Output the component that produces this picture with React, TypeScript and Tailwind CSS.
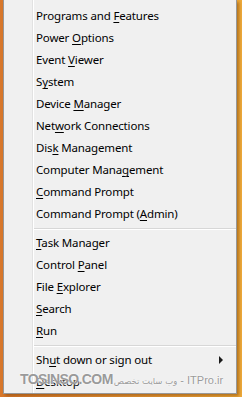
const groups: { label: string; key: number }[][] = [
  [
    { label: 'Programs and Features', key: 13 },
    { label: 'Power Options', key: 6 },
    { label: 'Event Viewer', key: 6 },
    { label: 'System', key: 1 },
    { label: 'Device Manager', key: 7 },
    { label: 'Network Connections', key: 3 },
    { label: 'Disk Management', key: 3 },
    { label: 'Computer Management', key: 13 },
    { label: 'Command Prompt', key: 0 },
    { label: 'Command Prompt (Admin)', key: 16 },
  ],
  [
    { label: 'Task Manager', key: 0 },
    { label: 'Control Panel', key: 8 },
    { label: 'File Explorer', key: 5 },
    { label: 'Search', key: 0 },
    { label: 'Run', key: 0 },
  ],
  [
    { label: 'Shut down or sign out', key: 2 },
    { label: 'Desktop', key: 0 },
  ],
]

function Label({ label, at }: { label: string; at: number }) {
  return (
    <span>
      {label.slice(0, at)}
      <span className="underline underline-offset-2 decoration-1">{label[at]}</span>
      {label.slice(at + 1)}
    </span>
  )
}

export default function App() {
  return (
    <div className="relative w-[242px] h-[397px] overflow-hidden bg-gradient-to-r from-[#d8782c] via-[#e69436] to-[#eeaa3a] pl-[3px] font-['Noto_Sans',sans-serif] text-[11.5px] tracking-[-0.15px] text-black">
      <div className="relative w-[234px] h-[394px] bg-[#f0f0f0] border border-t-0 border-[#979797] shadow-[2px_2px_3px_rgba(120,60,0,0.5)] pt-[5px]">
        {/* gutter line */}
        <div className="absolute left-[28px] top-0 bottom-0 w-px bg-[#e2e2e2]" />
        <div className="absolute left-[29px] top-0 bottom-0 w-px bg-white" />
        {groups.map((items, gi) => (
          <div key={gi}>
            {gi > 0 && (
              <div className="ml-[29px] mt-[3px] mb-[2px]">
                <div className="h-px bg-[#d7d7d7]" />
                <div className="h-px bg-white" />
              </div>
            )}
            {items.map((it) => (
              <div key={it.label} className="flex items-center h-[22px] pl-[32px] pr-[8px] leading-none">
                <Label label={it.label} at={it.key} />
                {it.label.startsWith('Shut') && (
                  <span className="ml-auto mr-[5px] w-0 h-0 border-y-[4px] border-y-transparent border-l-[4px] border-l-[#1a1a1a]" />
                )}
              </div>
            ))}
          </div>
        ))}
      </div>

      {/* watermark */}
      <div className="absolute left-[20px] top-[369px] flex items-baseline whitespace-nowrap pointer-events-none text-[#9a9a9a] tracking-normal [text-shadow:0_0_2px_#fff,0_0_1px_#fff]">
        <span className="font-['Liberation_Sans',sans-serif] text-[14px] font-bold tracking-[-0.6px]">TOSINSO.COM</span>
        <span dir="rtl" className="ml-[1px] font-['DejaVu_Sans',sans-serif] text-[8.5px]">وب سایت تخصص</span>
        <span className="ml-[3px] font-['Liberation_Sans',sans-serif] text-[11px]">- ITPro.ir</span>
      </div>
    </div>
  )
}
